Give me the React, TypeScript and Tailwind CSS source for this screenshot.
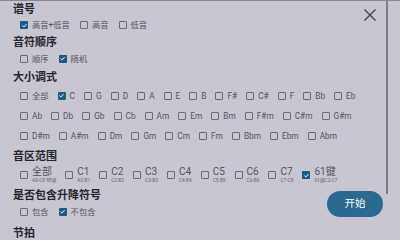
import React from "react";

const keysRows: [string, boolean?][][] = [
  [["全部"], ["C", true], ["G"], ["D"], ["A"], ["E"], ["B"], ["F#"], ["C#"], ["F"], ["Bb"], ["Eb"]],
  [["Ab"], ["Db"], ["Gb"], ["Cb"], ["Am"], ["Em"], ["Bm"], ["F#m"], ["C#m"], ["G#m"]],
  [["D#m"], ["A#m"], ["Dm"], ["Gm"], ["Cm"], ["Fm"], ["Bbm"], ["Ebm"], ["Abm"]],
];

const ranges = [
  { label: "全部", sub: "A0-C8 88键" },
  { label: "C1", sub: "A0-B1" },
  { label: "C2", sub: "C2-B2" },
  { label: "C3", sub: "C3-B3" },
  { label: "C4", sub: "C4-B4" },
  { label: "C5", sub: "C5-B5" },
  { label: "C6", sub: "C6-B6" },
  { label: "C7", sub: "C7-C8" },
  { label: "61键", sub: "61键C2-C7", checked: true },
];

function Box({ checked }: { checked?: boolean }) {
  if (checked) {
    return (
      <span className="flex h-[8px] w-[8px] shrink-0 items-center justify-center rounded-[1px] bg-[#1d5a84]">
        <svg viewBox="0 0 8 8" className="h-[7px] w-[7px]">
          <path d="M1.6 4.1 3.3 5.7 6.4 2.4" fill="none" stroke="#fff" strokeWidth="1.1" />
        </svg>
      </span>
    );
  }
  return <span className="block h-[8px] w-[8px] shrink-0 rounded-[1px] border border-[#6d6c75]" />;
}

function Option({ label, checked }: { label: string; checked?: boolean }) {
  return (
    <div className="flex items-center gap-[4px]">
      <Box checked={checked} />
      <span className="text-[8.3px] leading-none text-[#55545d]">{label}</span>
    </div>
  );
}

function Title({ children, h }: { children: React.ReactNode; h: string }) {
  return (
    <div className={`flex items-center pl-[13px] text-[11px] font-bold leading-none text-[#26252b] ${h}`}>
      {children}
    </div>
  );
}

export default function App() {
  return (
    <div className="relative h-[240px] w-[400px] overflow-hidden border-t border-[#8b8992] bg-[#c8c6d0] font-[Roboto,'Noto_Sans_CJK_SC',sans-serif]">
      <div className="flex flex-col">
        <Title h="h-[16px]">谱号</Title>
        <div className="flex h-[17px] items-center gap-x-[10px] pl-[20px]">
          <Option label="高音+低音" checked />
          <Option label="高音" />
          <Option label="低音" />
        </div>
        <Title h="h-[16px]">音符顺序</Title>
        <div className="flex h-[18px] items-center gap-x-[10px] pl-[20px]">
          <Option label="顺序" />
          <Option label="随机" checked />
        </div>
        <Title h="h-[18px]">大小调式</Title>
        {keysRows.map((row, i) => (
          <div key={i} className="flex h-[20px] items-center gap-x-[9px] pl-[20px]">
            {row.map(([k, c]) => (
              <Option key={k} label={k} checked={c} />
            ))}
          </div>
        ))}
        <Title h="h-[21px]">音区范围</Title>
        <div className="flex h-[20px] items-start gap-x-[9px] pl-[20px]">
          {ranges.map((r) => (
            <div key={r.label} className="flex items-start gap-[4px]">
              <div className="mt-[4px]">
                <Box checked={r.checked} />
              </div>
              <div className="flex flex-col">
                <span className="text-[10px] leading-[10px] text-[#55545d]">{r.label}</span>
                <span className="mt-[1px] whitespace-nowrap text-[4.8px] leading-[6px] text-[#6a6972]">{r.sub}</span>
              </div>
            </div>
          ))}
        </div>
        <Title h="h-[17px]">是否包含升降符号</Title>
        <div className="flex h-[16px] items-center gap-x-[10px] pl-[20px]">
          <Option label="包含" />
          <Option label="不包含" checked />
        </div>
        <Title h="h-[26px]">节拍</Title>
      </div>

      <button className="absolute right-[23px] top-[7px] flex h-[14px] w-[14px] items-center justify-center">
        <svg viewBox="0 0 14 14" className="h-[14px] w-[14px]">
          <path d="M1.5 1.5 12.5 12.5M12.5 1.5 1.5 12.5" stroke="#45444b" strokeWidth="1.4" fill="none" />
        </svg>
      </button>

      <div className="absolute left-[386px] top-0 h-[193px] w-[2px] bg-[#7d7b85]" />

      <button className="absolute left-[327px] top-[190px] flex h-[26px] w-[56px] items-center justify-center rounded-full bg-[#2b6a90] text-[10.5px] text-white">
        开始
      </button>
    </div>
  );
}
